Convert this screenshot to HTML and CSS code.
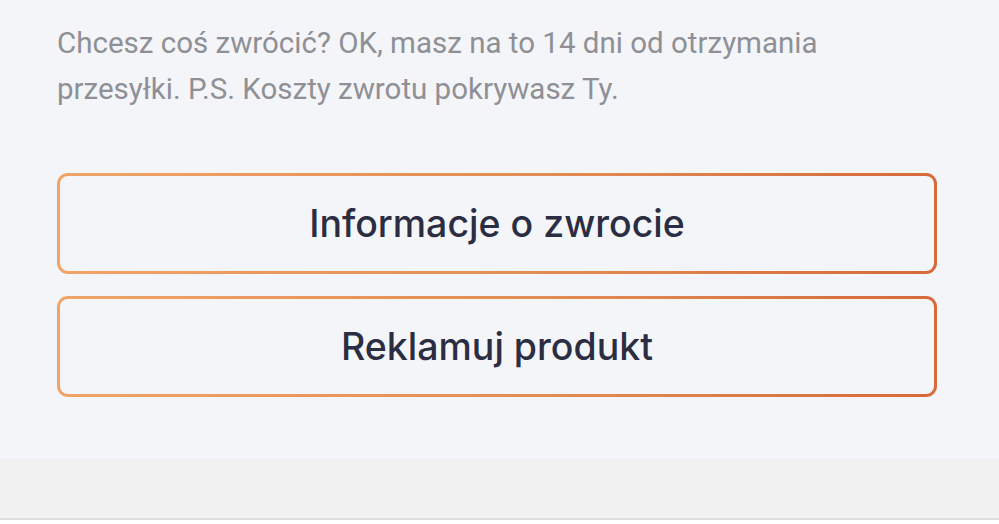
FILE: index.html
```html
<!DOCTYPE html>
<html lang="pl">
<head>
<meta charset="utf-8">
<link rel="stylesheet" href="styles.css">
</head>
<body>
<main class="page">
  <section class="returns">
    <p class="returns__text">Chcesz coś zwrócić? OK, masz na to 14 dni od otrzymania przesyłki. P.S. Koszty zwrotu pokrywasz Ty.</p>
    <div class="returns__actions">
      <button class="btn-outline" type="button">Informacje o zwrocie</button>
      <button class="btn-outline" type="button">Reklamuj produkt</button>
    </div>
  </section>
  <footer class="bottom-bar"></footer>
</main>
</body>
</html>
```
FILE: styles.css
```css
html, body {
  margin: 0;
  padding: 0;
  background: #ffffff;
}
.page {
  display: flex;
  flex-direction: column;
  width: 999px;
  height: 524px;
  overflow: hidden;
}
.returns {
  background: #f4f5f9;
  padding: 20px 62px 0 57px;
  height: 459px;
  flex-shrink: 0;
  box-sizing: border-box;
}
.returns__text {
  margin: 0;
  font-family: Roboto, "Noto Sans", sans-serif;
  font-size: 29.5px;
  line-height: 46px;
  color: #8f9095;
}
.returns__actions {
  display: flex;
  flex-direction: column;
  gap: 22px;
  margin-top: 61px;
}
.btn-outline {
  height: 101px;
  border: 3px solid transparent;
  border-radius: 11px;
  background:
    linear-gradient(#f4f5f9, #f4f5f9) padding-box,
    linear-gradient(90deg, #f0a468, #e08a52 60%, #d7693a) border-box;
  font-family: Inter, "Liberation Sans", sans-serif;
  font-weight: 500;
  font-size: 37.5px;
  color: #2b2d42;
  cursor: pointer;
}
.bottom-bar {
  height: 61px;
  flex-shrink: 0;
  box-sizing: border-box;
  background: #f1f1f1;
  border-bottom: 2px solid #dedede;
}
```
